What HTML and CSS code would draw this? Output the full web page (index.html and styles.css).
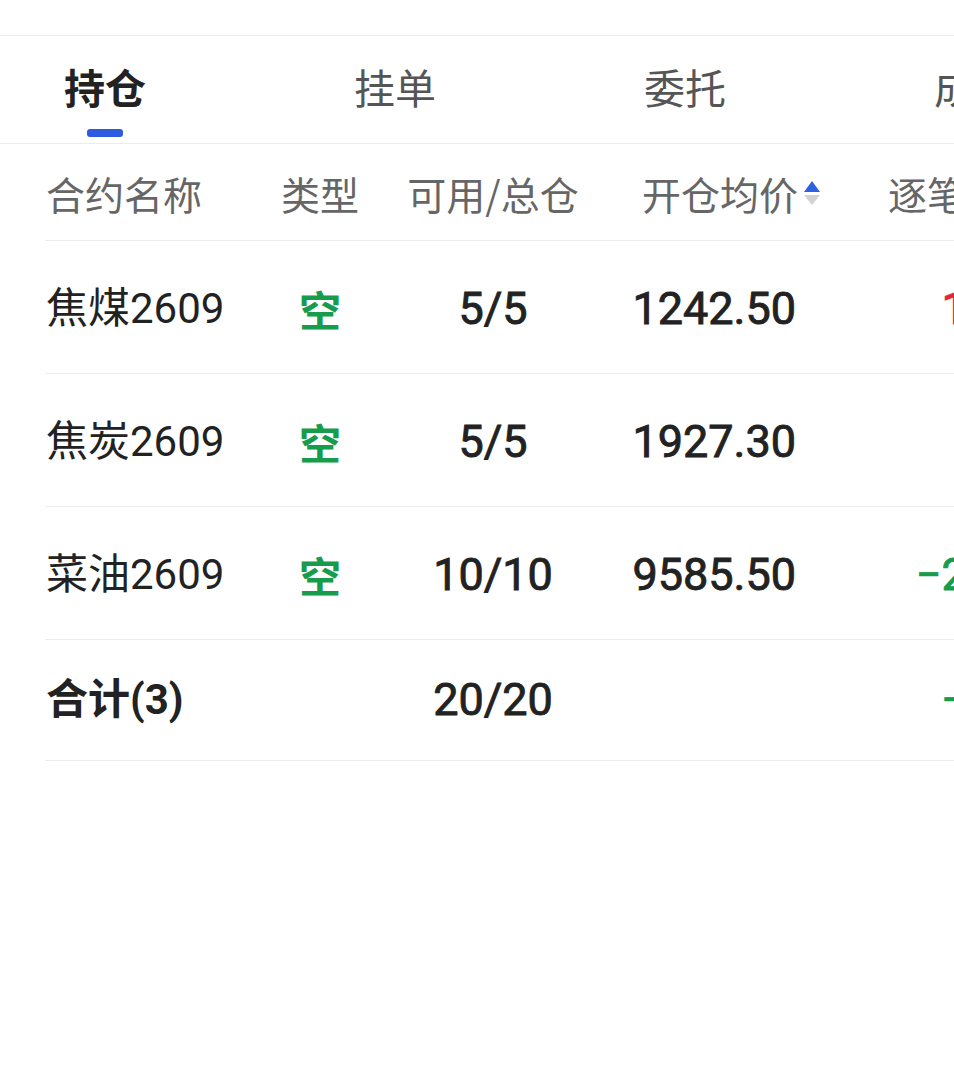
FILE: index.html
```html
<!DOCTYPE html>
<html lang="zh-CN">
<head>
<meta charset="utf-8">
<title>持仓</title>
<link rel="stylesheet" href="styles.css">
</head>
<body>
<div class="screen">
  <div class="topbar"></div>

  <nav class="tabs">
    <div class="tab active">持仓</div>
    <div class="tab">挂单</div>
    <div class="tab">委托</div>
    <div class="tab">成交</div>
  </nav>

  <div class="table">
    <div class="row head">
      <div class="cell c-name">合约名称</div>
      <div class="cell c-type">类型</div>
      <div class="cell c-qty">可用/总仓</div>
      <div class="cell c-price">开仓均价<svg class="sort" width="16" height="25" viewBox="0 0 16 25"><polygon points="8,0 16,11 0,11" fill="#2f5fe3"/><polygon points="0,14 16,14 8,24" fill="#d2d2d2"/></svg></div>
      <div class="cell c-pnl">逐笔浮盈<svg class="sort" width="16" height="25" viewBox="0 0 16 25"><polygon points="8,0 16,11 0,11" fill="#d2d2d2"/><polygon points="0,14 16,14 8,24" fill="#d2d2d2"/></svg></div>
    </div>

    <div class="row">
      <div class="cell c-name">焦煤2609</div>
      <div class="cell c-type short">空</div>
      <div class="cell c-qty num">5/5</div>
      <div class="cell c-price num">1242.50</div>
      <div class="cell c-pnl num up">1650.00</div>
    </div>

    <div class="row">
      <div class="cell c-name">焦炭2609</div>
      <div class="cell c-type short">空</div>
      <div class="cell c-qty num">5/5</div>
      <div class="cell c-price num">1927.30</div>
      <div class="cell c-pnl num up">235.00</div>
    </div>

    <div class="row">
      <div class="cell c-name">菜油2609</div>
      <div class="cell c-type short">空</div>
      <div class="cell c-qty num">10/10</div>
      <div class="cell c-price num">9585.50</div>
      <div class="cell c-pnl num down">−2850.00</div>
    </div>

    <div class="row total">
      <div class="cell c-name">合计(3)</div>
      <div class="cell c-type"></div>
      <div class="cell c-qty num">20/20</div>
      <div class="cell c-price num"></div>
      <div class="cell c-pnl num down">−965.00</div>
    </div>
  </div>
</div>
</body>
</html>
```

FILE: styles.css
```css
html, body {
  margin: 0;
  padding: 0;
  background: #ffffff;
}

body {
  width: 954px;
  height: 1078px;
  overflow: hidden;
  font-family: Roboto, "Noto Sans CJK SC", sans-serif;
  color: #222222;
}

.screen {
  width: 954px;
  overflow: hidden;
}

/* blank strip above the tab bar */
.topbar {
  height: 35px;
  border-bottom: 1px solid #ececec;
}

/* tab bar */
.tabs {
  display: flex;
  gap: 208px;
  padding: 22px 0 6px 64px;
  border-bottom: 1px solid #ececec;
  white-space: nowrap;
}

.tab {
  display: flex;
  flex-direction: column;
  align-items: center;
  font-family: "Noto Sans CJK SC", sans-serif;
  font-size: 41px;
  line-height: 56px;
  color: #555555;
  flex-shrink: 0;
}

.tab::after {
  content: "";
  display: block;
  width: 36px;
  height: 8px;
  margin-top: 15px;
  border-radius: 3px;
  background: transparent;
}

.tab.active {
  color: #222222;
  font-weight: 700;
}

.tab.active::after {
  background: #2f5be0;
}

/* positions table */
.table {
  margin-left: 45px;
  width: 1060px;
}

.row {
  display: grid;
  grid-template-columns: 215px 120px 226px 214px 285px;
  align-items: center;
  box-sizing: border-box;
  height: 133px;
  padding-top: 4px;
  border-bottom: 1px solid #ececec;
  white-space: nowrap;
}

.row.head {
  height: 97px;
  padding-top: 2px;
}

.row.total {
  height: 121px;
  padding-top: 0;
}

.cell {
  font-size: 42px;
  line-height: 56px;
}

.head .cell {
  font-family: "Noto Sans CJK SC", sans-serif;
  font-size: 39px;
  color: #666666;
}

.c-name { text-align: left; padding-left: 1px; }
.c-type { text-align: center; }
.c-qty { text-align: center; }
.c-price { text-align: right; padding-right: 24px; }
.c-pnl { text-align: right; }

.head .c-price {
  display: flex;
  align-items: center;
  justify-content: flex-end;
  padding-right: 0;
}

.head .c-pnl {
  display: flex;
  align-items: center;
  justify-content: flex-start;
  padding-left: 68px;
}

.sort {
  margin-left: 6px;
  flex-shrink: 0;
}

.short {
  color: #169c4b;
  font-family: "Noto Sans CJK SC", sans-serif;
  font-weight: 700;
}

/* figures: regular cut thickened to a medium weight */
.num {
  font-size: 45px;
  font-weight: 400;
  -webkit-text-stroke: 0.9px currentColor;
  color: #222222;
}

.total .c-name {
  font-weight: 700;
}

.up { color: #e3263a; }
.down { color: #169c4b; }
```
